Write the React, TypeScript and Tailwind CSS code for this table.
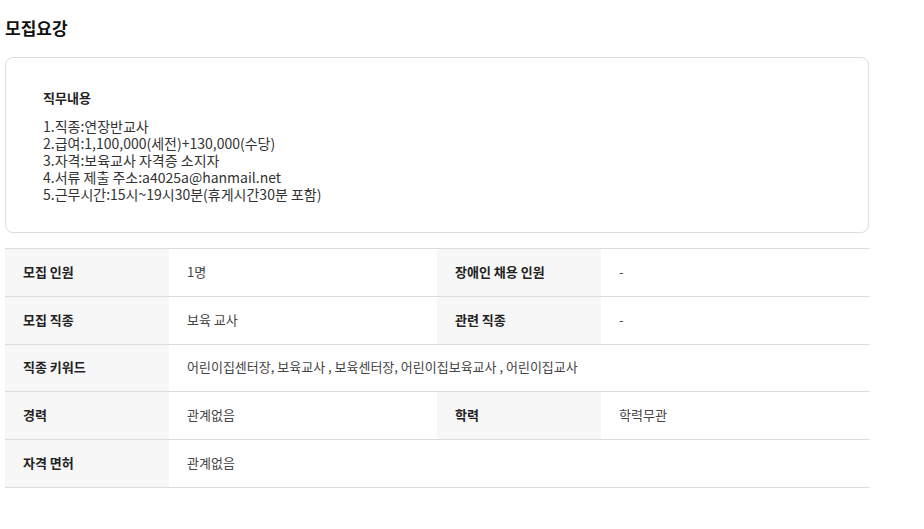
const font = { fontFamily: '"Noto Sans CJK KR", "Noto Sans", sans-serif' }

const lines = [
  '1.직종:연장반교사',
  '2.급여:1,100,000(세전)+130,000(수당)',
  '3.자격:보육교사 자격증 소지자',
  '4.서류 제출 주소:a4025a@hanmail.net',
  '5.근무시간:15시~19시30분(휴게시간30분 포함)',
]

function Label({ children }: { children: React.ReactNode }) {
  return (
    <div className="w-[164px] shrink-0 bg-[#f7f7f7] pl-[18px] pb-[2px] flex items-center text-[13px] font-bold text-[#222]">
      {children}
    </div>
  )
}

function Value({ children }: { children: React.ReactNode }) {
  return <div className="flex-1 pl-[18px] pb-[2px] flex items-center text-[13px] text-[#444]">{children}</div>
}

export default function App() {
  return (
    <div className="min-h-screen bg-white" style={font}>
      <div className="w-[864px] ml-[5px]">
        <h2 className="pt-[16px] text-[17px] font-bold text-[#111] leading-[24px]">모집요강</h2>
        <div className="mt-[17px] h-[176px] border border-[#dddddd] rounded-[8px] pl-[37px] pt-[31px]">
          <div className="text-[13px] font-bold text-[#222] leading-[18px]">직무내용</div>
          <div className="mt-[11px] text-[14px] text-[#333] leading-[17px]">
            {lines.map((l) => (
              <div key={l}>{l}</div>
            ))}
          </div>
        </div>
        <div className="mt-[15px] border-t border-[#dddddd]">
          <div className="flex h-[48px] border-b border-[#dddddd]">
            <Label>모집 인원</Label>
            <Value>1명</Value>
            <Label>장애인 채용 인원</Label>
            <Value>-</Value>
          </div>
          <div className="flex h-[48px] border-b border-[#dddddd]">
            <Label>모집 직종</Label>
            <Value>보육 교사</Value>
            <Label>관련 직종</Label>
            <Value>-</Value>
          </div>
          <div className="flex h-[47px] border-b border-[#dddddd]">
            <Label>직종 키워드</Label>
            <Value>어린이집센터장, 보육교사 , 보육센터장, 어린이집보육교사 , 어린이집교사</Value>
          </div>
          <div className="flex h-[48px] border-b border-[#dddddd]">
            <Label>경력</Label>
            <Value>관계없음</Value>
            <Label>학력</Label>
            <Value>학력무관</Value>
          </div>
          <div className="flex h-[48px] border-b border-[#dddddd]">
            <Label>자격 면허</Label>
            <Value>관계없음</Value>
          </div>
        </div>
      </div>
    </div>
  )
}
